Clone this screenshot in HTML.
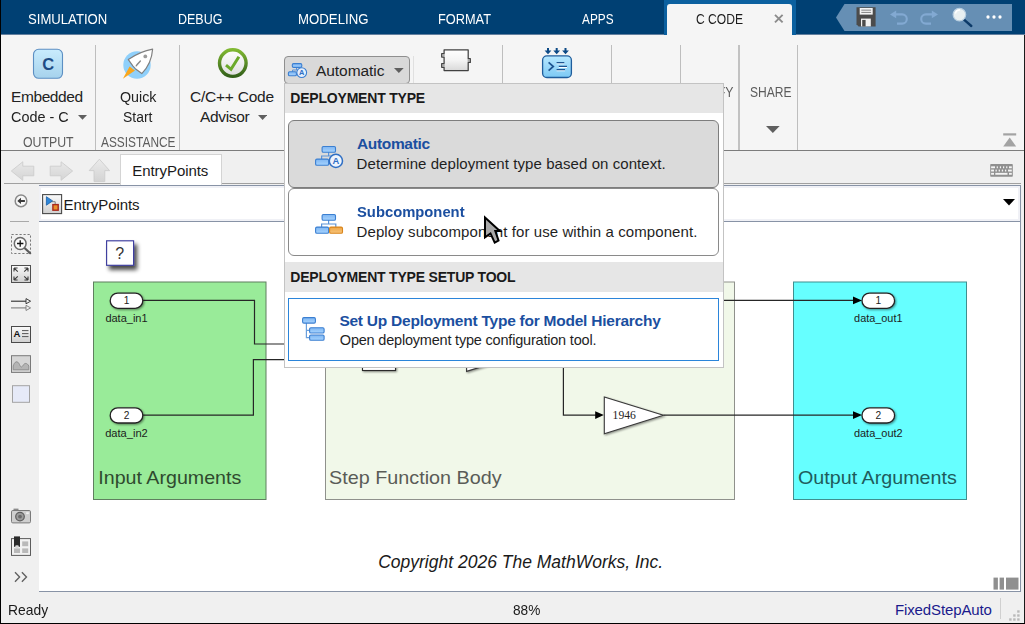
<!DOCTYPE html><html lang="en"><head><meta charset="utf-8"><title>EntryPoints - Simulink</title><style>
html,body{margin:0;padding:0;background:#f0f0f0;}
body{width:1025px;height:624px;overflow:hidden;position:relative;font-family:"Liberation Sans",sans-serif;}
#app{position:absolute;left:0;top:0;width:1025px;height:624px;overflow:hidden;background:#f0f0f0;}
#app div,#app span,#app svg{position:absolute;box-sizing:border-box;}
#app section,#app nav,#app header,#app footer,#app main,#app aside,#app ul,#app li{position:absolute;left:0;top:0;margin:0;padding:0;list-style:none;}
.t{white-space:pre;transform-origin:0 50%;}
.sep{background:#bebebe;width:1px;}
</style></head><body><div id="app"><svg style="left:0;top:0" width="1025" height="624" viewBox="0 0 1025 624"><defs>
<linearGradient id="gC" x1="0" y1="0" x2="0" y2="1"><stop offset="0" stop-color="#c9ecfd"/><stop offset="1" stop-color="#a6d2ec"/></linearGradient>
<linearGradient id="gCode" x1="0" y1="0" x2="0" y2="1"><stop offset="0" stop-color="#b8e8ff"/><stop offset="1" stop-color="#7cc9f4"/></linearGradient>
<linearGradient id="gRing" x1="0" y1="0" x2="0" y2="1"><stop offset="0" stop-color="#80b832"/><stop offset="1" stop-color="#33601a"/></linearGradient>
<linearGradient id="gDisc" x1="0" y1="0" x2="0" y2="1"><stop offset="0" stop-color="#ffffff"/><stop offset="1" stop-color="#dedede"/></linearGradient>
<linearGradient id="gComp" x1="0" y1="0" x2="0" y2="1"><stop offset="0" stop-color="#ffffff"/><stop offset="0.5" stop-color="#f4f4f4"/><stop offset="1" stop-color="#d9d9d9"/></linearGradient>
<linearGradient id="gBtn" x1="0" y1="0" x2="0" y2="1"><stop offset="0" stop-color="#fbfbfb"/><stop offset="1" stop-color="#cfcfcf"/></linearGradient>
<linearGradient id="gBlue" x1="0" y1="0" x2="0" y2="1"><stop offset="0" stop-color="#7fb6f2"/><stop offset="1" stop-color="#a6d3ff"/></linearGradient>
<linearGradient id="gOrange" x1="0" y1="0" x2="0" y2="1"><stop offset="0" stop-color="#eea544"/><stop offset="1" stop-color="#f7c47a"/></linearGradient>
<filter id="sh" x="-50%" y="-50%" width="220%" height="220%"><feGaussianBlur in="SourceAlpha" stdDeviation="2.1"/><feOffset dx="2.6" dy="3.6"/><feComponentTransfer><feFuncA type="linear" slope="0.72"/></feComponentTransfer><feMerge><feMergeNode/><feMergeNode in="SourceGraphic"/></feMerge></filter>
<filter id="sh2" x="-30%" y="-30%" width="180%" height="180%"><feGaussianBlur in="SourceAlpha" stdDeviation="0.9"/><feOffset dx="1.3" dy="1.3"/><feComponentTransfer><feFuncA type="linear" slope="0.45"/></feComponentTransfer><feMerge><feMergeNode/><feMergeNode in="SourceGraphic"/></feMerge></filter>
<linearGradient id="gNav" gradientUnits="userSpaceOnUse" x1="0" y1="159" x2="0" y2="182"><stop offset="0" stop-color="#ebebeb"/><stop offset="1" stop-color="#d3d3d3"/></linearGradient>
<filter id="blur1"><feGaussianBlur stdDeviation="0.6"/></filter>
</defs></svg><header class="tabbar"><div style="left:0px;top:0px;width:1025px;height:34px;background:#004073;"></div><div style="left:0px;top:34px;width:1025px;height:1px;background:#637f9e;"></div><span class="t" style="left:28.00px;top:10.00px;font-size:15px;line-height:18px;color:#ffffff;transform:scaleX(0.8748);">SIMULATION</span><span class="t" style="left:177.67px;top:10.00px;font-size:15px;line-height:18px;color:#ffffff;transform:scaleX(0.8321);">DEBUG</span><span class="t" style="left:297.62px;top:10.00px;font-size:15px;line-height:18px;color:#ffffff;transform:scaleX(0.8808);">MODELING</span><span class="t" style="left:438.15px;top:10.00px;font-size:15px;line-height:18px;color:#ffffff;transform:scaleX(0.8518);">FORMAT</span><span class="t" style="left:582.00px;top:10.00px;font-size:15px;line-height:18px;color:#ffffff;transform:scaleX(0.7872);">APPS</span><div style="left:664px;top:0px;width:132px;height:35px;background:#0b609f;"></div><div style="left:667px;top:4px;width:125px;height:31px;background:#f5f5f5;border-radius:3px 3px 0 0;"></div><span class="t" style="left:696.40px;top:10.00px;font-size:15px;line-height:18px;color:#1c1c1c;transform:scaleX(0.8057);">C CODE</span><svg style="left:0;top:0" width="1025" height="624" viewBox="0 0 1025 624"><path d="M775 14.8L782.6 22.4M782.6 14.8L775 22.4" stroke="#8c8c8c" stroke-width="1.9" fill="none"/></svg><svg style="left:0;top:0" width="1025" height="624" viewBox="0 0 1025 624">
<path d="M836 17.5L844.5 4H1012V31H844.5Z" fill="#668fb4"/>
<g class="save">
 <path d="M856.5 7.2H875.6V26.4H858.6L856.5 24.3Z" fill="#4b4b4b"/>
 <rect x="859.7" y="8" width="13" height="6.6" fill="#f4f4f4"/>
 <rect x="861.3" y="9.6" width="9.8" height="1.1" fill="#8d8d8d"/><rect x="861.3" y="11.9" width="9.8" height="1.1" fill="#8d8d8d"/>
 <rect x="861" y="18.6" width="9.8" height="7.8" fill="#f1f1f1"/>
 <rect x="862.2" y="19.9" width="3.4" height="6.5" fill="#4b4b4b"/>
</g>
<g class="undo" fill="none" stroke="#82a9d2" stroke-width="2.1">
 <path d="M894.5 14.4H902.2A4.6 4.6 0 0 1 902.2 23.6H897"/>
 <path d="M890 14.4L896.2 10.6V18.2Z" fill="#82a9d2" stroke="none"/>
</g>
<g class="redo" fill="none" stroke="#82a9d2" stroke-width="2.1">
 <path d="M933.5 14.4H925.8A4.6 4.6 0 0 0 925.8 23.6H931"/>
 <path d="M938 14.4L931.8 10.6V18.2Z" fill="#82a9d2" stroke="none"/>
</g>
<g class="search">
 <path d="M964 19.6L971.3 26" stroke="#0c3a68" stroke-width="2.4" stroke-linecap="round"/>
 <circle cx="959.4" cy="14.6" r="6.3" fill="#e9f0f1" stroke="#b9cfe0" stroke-width="1.2"/>
 <path d="M955.5 13.5A4.2 4.2 0 0 1 960 10" stroke="#ffffff" stroke-width="1.4" fill="none"/>
</g>
<g class="more" fill="#ffffff"><circle cx="988" cy="17" r="1.65"/><circle cx="994" cy="17" r="1.65"/><circle cx="1000" cy="17" r="1.65"/></g>
</svg></header><section class="toolstrip"><div style="left:0px;top:35px;width:1025px;height:115px;background:#f5f5f5;"></div><div style="left:0px;top:150px;width:1025px;height:1px;background:#7c7c7c;"></div><div class="sep" style="left:95px;top:45px;width:1px;height:105px;"></div><div class="sep" style="left:179px;top:45px;width:1px;height:105px;"></div><div class="sep" style="left:502px;top:45px;width:1px;height:105px;"></div><div class="sep" style="left:611px;top:45px;width:1px;height:105px;"></div><div class="sep" style="left:680px;top:45px;width:1px;height:105px;"></div><div class="sep" style="left:797px;top:45px;width:1px;height:105px;"></div><div style="left:738px;top:45px;width:2px;height:105px;background:#c2c2c2;"></div><div style="left:413px;top:56px;width:1px;height:27px;background:#e0e0e0;"></div><svg style="left:0;top:0" width="1025" height="624" viewBox="0 0 1025 624"><rect x="33.5" y="49.3" width="29" height="29" rx="5.2" fill="url(#gC)" stroke="#5c8fc3" stroke-width="1.1"/>
<text x="48.2" y="70" text-anchor="middle" font-family="Liberation Sans, sans-serif" font-weight="700" font-size="16.5" fill="#1e4c84">C</text></svg><span class="t" style="left:11.00px;top:87.00px;font-size:15.5px;line-height:19px;color:#222222;letter-spacing:-0.407px;">Embedded</span><span class="t" style="left:11.30px;top:107.00px;font-size:15.5px;line-height:19px;color:#222222;transform:scaleX(0.9300);">Code - C</span><svg style="left:77.5px;top:115px" width="9" height="4.8" viewBox="0 0 9 4.8" ><path d="M0 0H9L4.5 4.8Z" fill="#5f5f5f"/></svg><span class="t" style="left:22.50px;top:133.00px;font-size:15px;line-height:18px;color:#5c5c5c;transform:scaleX(0.8211);">OUTPUT</span><svg style="left:0;top:0" width="1025" height="624" viewBox="0 0 1025 624"><circle cx="137" cy="65" r="13.7" fill="#8fd0fb" filter="url(#blur1)"/>
<path d="M122.9 78.7L129.6 66.6L135 70.6Z" fill="#f9a61c"/>
<path d="M152.6 49.2Q140.5 51.3 128.3 59.6L133 66.1L135.3 68.7L141.8 73.6Q151.6 63.5 152.6 49.2Z" fill="#ffffff" stroke="#808080" stroke-width="1.2" stroke-linejoin="round"/>
<circle cx="145.3" cy="56.4" r="1.9" fill="#9c9c9c"/>
<path d="M140.4 61L136.9 64.8L136.2 65.9Z" fill="#8a8a8a" stroke="#8a8a8a" stroke-width="1.3" stroke-linejoin="round"/></svg><span class="t" style="left:119.50px;top:87.00px;font-size:15.5px;line-height:19px;color:#222222;transform:scaleX(0.9217);">Quick</span><span class="t" style="left:122.50px;top:107.00px;font-size:15.5px;line-height:19px;color:#222222;transform:scaleX(0.8975);">Start</span><span class="t" style="left:100.50px;top:133.00px;font-size:15px;line-height:18px;color:#5c5c5c;transform:scaleX(0.7933);">ASSISTANCE</span><svg style="left:0;top:0" width="1025" height="624" viewBox="0 0 1025 624"><circle cx="232.8" cy="63.1" r="13.3" fill="url(#gDisc)" stroke="url(#gRing)" stroke-width="3.4"/>
<path d="M226 65.2L231 69.3L238.9 56.8" fill="none" stroke="#6aa92a" stroke-width="3"/></svg><span class="t" style="left:190.00px;top:87.00px;font-size:15.5px;line-height:19px;color:#222222;letter-spacing:-0.226px;">C/C++ Code</span><span class="t" style="left:200.00px;top:107.00px;font-size:15.5px;line-height:19px;color:#222222;letter-spacing:-0.337px;">Advisor</span><svg style="left:257.6px;top:115px" width="9.2" height="4.9" viewBox="0 0 9.2 4.9" ><path d="M0 0H9.2L4.6 4.9Z" fill="#5f5f5f"/></svg><div style="left:284px;top:56px;width:126px;height:28px;background:#d9d9d9;border:1px solid #8f8f8f;border-radius:4px;"></div><svg style="left:0;top:0" width="1025" height="624" viewBox="0 0 1025 624"><path d="M296.5 67.5V70H292.5V72" fill="none" stroke="#5b93d8" stroke-width="1"/>
<rect x="292.3" y="63.6" width="9.5" height="3.8" rx="1.3" fill="url(#gBlue)" stroke="#3b7fd1" stroke-width="1.1"/><rect x="288.4" y="71.8" width="8" height="4" rx="1.3" fill="url(#gBlue)" stroke="#3b7fd1" stroke-width="1.1"/>
<circle cx="301.7" cy="72.6" r="4.9" fill="#e4eefc" stroke="#3b7fd1" stroke-width="1.1"/>
<text x="301.7" y="75.3" text-anchor="middle" font-family="Liberation Sans, sans-serif" font-weight="700" font-size="7.4" fill="#2f6fc4">A</text></svg><span class="t" style="left:316.00px;top:61.00px;font-size:15.5px;line-height:19px;color:#222222;letter-spacing:-0.052px;">Automatic</span><svg style="left:394.3px;top:68px" width="9.7" height="5" viewBox="0 0 9.7 5" ><path d="M0 0H9.7L4.85 5Z" fill="#5f5f5f"/></svg><svg style="left:0;top:0" width="1025" height="624" viewBox="0 0 1025 624"><path d="M444.1 49.8H468.2V58.7H470.3V62.4H468.2V70.5H444.1V67.3H441.7V63.6H444.1V57H441.7V53.7H444.1Z" fill="url(#gComp)" stroke="#414141" stroke-width="1.25" stroke-linejoin="round"/>
<g fill="#8f8f8f" fill-opacity="0.75"><rect x="442.3" y="54.3" width="2.4" height="2.1"/><rect x="442.3" y="64.2" width="2.4" height="2.5"/><rect x="467.6" y="59.3" width="2.1" height="2.5"/></g></svg><svg style="left:0;top:0" width="1025" height="624" viewBox="0 0 1025 624"><rect x="542.6" y="55.9" width="28.8" height="21.6" rx="4.3" fill="url(#gCode)" stroke="#1f5d9c" stroke-width="1.3"/>
<g fill="#0d4a86"><path d="M547 48H549V50.6H551.4L548 54.3L544.6 50.6H547Z"/><path d="M555.7 48H557.7V50.6H560.1L556.7 54.3L553.3 50.6H555.7Z"/><path d="M564.5 48H566.5V50.6H568.9L565.5 54.3L562.1 50.6H564.5Z"/></g>
<path d="M548.6 62.4L553.3 66.5L548.6 70.7" fill="none" stroke="#1d5592" stroke-width="1.7"/>
<g stroke="#ffffff" stroke-width="1.1"><path d="M556.6 63.7H564.3M558.8 67.4H567M556.6 70.8H565"/></g>
<g stroke="#1d5592" stroke-width="1.2"><path d="M556.6 62.6H564.3M558.8 66.3H567M556.6 69.7H565"/></g></svg><span class="t" style="left:689.00px;top:83.00px;font-size:15px;line-height:18px;color:#5c5c5c;transform:scaleX(0.8215);">VERIFY</span><span class="t" style="left:749.90px;top:83.00px;font-size:15px;line-height:18px;color:#5c5c5c;transform:scaleX(0.8050);">SHARE</span><svg style="left:766.3px;top:126px" width="13.7" height="7" viewBox="0 0 13.7 7" ><path d="M0 0H13.7L6.85 7Z" fill="#5f5f5f"/></svg><svg style="left:0;top:0" width="1025" height="624" viewBox="0 0 1025 624"><rect x="1003.2" y="133.3" width="13" height="2.2" fill="#a3a3a3"/><path d="M1009.7 137.6L1016.2 146.5H1003.2Z" fill="#a3a3a3"/></svg></section><nav class="navbar"><div style="left:0px;top:151px;width:1025px;height:34px;background:#f0f0f0;"></div><div style="left:4px;top:183px;width:1017px;height:1px;background:#a0a0a0;"></div><div style="left:120px;top:154px;width:102px;height:31px;background:#ffffff;border:1px solid #d4d4d4;border-bottom:none;"></div><span class="t" style="left:132.30px;top:162.00px;font-size:15px;line-height:18px;color:#1a1a1a;letter-spacing:-0.070px;">EntryPoints</span><svg style="left:0;top:0" width="1025" height="624" viewBox="0 0 1025 624"><g fill="url(#gNav)" stroke="#cdcdcd" stroke-width="0.9" stroke-linejoin="round">
<path d="M11.3 171L22.8 161.8V166.2H33.8V175.8H22.8V180.3Z"/>
<path d="M72.6 171L61.1 161.8V166.2H50.2V175.8H61.1V180.3Z"/>
<path d="M99.4 159.2L109.6 170.6H104.8V181.6H94V170.6H89.2Z"/></g></svg><svg style="left:0;top:0" width="1025" height="624" viewBox="0 0 1025 624"><rect x="990.2" y="164.1" width="22.6" height="12.7" rx="0.8" fill="#8f8f8f"/><g fill="#f4f4f4"><rect x="991.10" y="166.35" width="3.90" height="1.9"/><rect x="996.70" y="166.35" width="1.20" height="1.9"/><rect x="999.85" y="166.35" width="1.20" height="1.9"/><rect x="1003.00" y="166.35" width="1.20" height="1.9"/><rect x="1006.15" y="166.35" width="1.20" height="1.9"/><rect x="1009.00" y="166.35" width="2.80" height="1.9"/><rect x="991.10" y="169.60" width="2.90" height="1.9"/><rect x="995.50" y="169.60" width="1.30" height="1.9"/><rect x="998.65" y="169.60" width="1.30" height="1.9"/><rect x="1001.80" y="169.60" width="1.30" height="1.9"/><rect x="1004.95" y="169.60" width="1.30" height="1.9"/><rect x="1008.00" y="169.60" width="3.80" height="1.9"/><rect x="991.10" y="172.85" width="2.90" height="1.9"/><rect x="995.30" y="172.85" width="12.20" height="1.9"/><rect x="1009.00" y="172.85" width="2.80" height="1.9"/></g></svg></nav><aside class="palette"><div style="left:1px;top:185px;width:38px;height:407px;background:#f0f0f0;"></div><svg style="left:0;top:0" width="1025" height="624" viewBox="0 0 1025 624">
<g class="back"><circle cx="21" cy="200.9" r="5.8" fill="#f6f6f6" stroke="#8a8a8a" stroke-width="1.5"/><path d="M17.3 200.9L21 197.8V199.9H24.9V201.9H21V204Z" fill="#3a3a3a"/></g>
<rect x="10" y="221" width="19" height="1" fill="#a9a9a9"/>
<g class="zoom"><rect x="11.5" y="234.5" width="19" height="19" fill="none" stroke="#7a7a7a" stroke-width="1" stroke-dasharray="2.2 1.8"/>
 <path d="M24.8 248.2L30.2 253.2" stroke="#5a5a5a" stroke-width="2.2" stroke-linecap="round"/>
 <circle cx="20.2" cy="243.5" r="5.9" fill="#fafafa" stroke="#6a6a6a" stroke-width="1.5"/>
 <path d="M17 243.5H23.4M20.2 240.3V246.7" stroke="#111" stroke-width="1.3"/></g>
<g class="fit"><rect x="11.5" y="265.5" width="19" height="17" fill="url(#gBtn)" stroke="#4f4f4f" stroke-width="1"/>
 <path d="M14 268V271.6M14 268H17.6M14 268L17.8 271.6M28 268V271.6M28 268H24.4M28 268L24.2 271.6M14 280V276.4M14 280H17.6M14 280L17.8 276.4M28 280V276.4M28 280H24.4M28 280L24.2 276.4" stroke="#3c3c3c" stroke-width="1.1" fill="none"/></g>
<g class="lines"><path d="M11 301.2H28.6" stroke="#2e2e2e" stroke-width="1.1"/><path d="M26 298.6L30.6 301.2L26 303.8Z" fill="#f0f0f0" stroke="#2e2e2e" stroke-width="0.9"/>
 <path d="M11 307.9H28.6" stroke="#7c7c7c" stroke-width="1.1"/><path d="M26 305.3L30.6 307.9L26 310.5Z" fill="#f0f0f0" stroke="#7c7c7c" stroke-width="0.9"/></g>
<g class="annot"><rect x="11.5" y="326.5" width="19" height="16" fill="url(#gBtn)" stroke="#4a4a4a" stroke-width="1"/>
 <text x="13.4" y="337.3" font-family="Liberation Sans, sans-serif" font-weight="700" font-size="9.5" fill="#111">A</text>
 <path d="M22 330.6H28.5M22 333.6H28.5M22 336.6H28.5" stroke="#555" stroke-width="1"/></g>
<g class="image"><rect x="11.5" y="355.7" width="19" height="16.7" fill="#d6d6d6" stroke="#7a7a7a" stroke-width="1"/>
 <path d="M13.2 369.8V366C14.5 361.5 17.5 360 19.5 364.5C20.5 367 21.5 368 23 365.5C24.5 362.8 27 362.5 28.8 366V369.8Z" fill="#b4b4b4" stroke="#8a8a8a" stroke-width="0.9"/></g>
<rect class="area" x="12.5" y="385.7" width="17" height="16.6" fill="#e6eaf8" stroke="#a3a3a3" stroke-width="1"/>
<g class="camera"><rect x="13.5" y="508.6" width="5" height="2.5" fill="#8a8a8a"/><rect x="11.5" y="510.5" width="19" height="12.4" rx="1.3" fill="#cfcfcf" stroke="#7a7a7a" stroke-width="1"/>
 <circle cx="20" cy="516.6" r="4.3" fill="#9b9b9b" stroke="#5e5e5e" stroke-width="1.2"/><circle cx="20" cy="516.6" r="1.9" fill="#6a6a6a"/><rect x="26.2" y="512.3" width="2.6" height="1.8" fill="#f3f3f3"/></g>
<g class="props"><rect x="11.5" y="538.6" width="19" height="16.8" fill="#f2f2f2" stroke="#5c5c5c" stroke-width="1"/>
 <rect x="14" y="548.4" width="6" height="4.6" fill="#b9b9b9"/><rect x="22.2" y="541.4" width="6" height="4.8" fill="#b9b9b9"/><rect x="22.2" y="548.4" width="6" height="4.6" fill="#b9b9b9"/>
 <rect x="14" y="536.4" width="6" height="10.4" fill="#2b2b2b"/><rect x="15.2" y="545.2" width="3.6" height="2.8" rx="1.3" fill="#d8d8d8"/></g>
<path class="expand" d="M15 572.2L19.6 577L15 581.8M21.9 572.2L26.5 577L21.9 581.8" fill="none" stroke="#606060" stroke-width="1.35"/>
</svg></aside><div class="breadcrumb" style="left:0;top:0"><div style="left:39px;top:185px;width:982px;height:37px;background:#ffffff;border:1px solid #8893a6;border-left:none;box-shadow:inset 0 0 0 2px #f0f1f6;"></div><svg style="left:0;top:0" width="1025" height="624" viewBox="0 0 1025 624"><rect x="42.6" y="194.6" width="19" height="19" fill="url(#gBtn)" stroke="#4a4a4a" stroke-width="1.1"/>
<path d="M50 201.7H55.2V205.5" fill="none" stroke="#7d7d7d" stroke-width="1"/>
<path d="M46.4 196.7L52.6 200.9L46.4 205.2Z" fill="#2d86d9" stroke="#1b5fa8" stroke-width="0.8"/>
<rect x="52.9" y="204.6" width="5.3" height="5.6" fill="#e9902a" stroke="#a8281c" stroke-width="1.4"/></svg><span class="t" style="left:63.60px;top:196.00px;font-size:15px;line-height:18px;color:#1a1a1a;letter-spacing:-0.070px;">EntryPoints</span><svg style="left:1002.6px;top:199.4px" width="12" height="6.5" viewBox="0 0 12 6.5" ><path d="M0 0H12L6.0 6.5Z" fill="#000000"/></svg></div><main class="canvas"><div style="left:39px;top:222px;width:982px;height:370px;background:#ffffff;border-right:1px solid #8893a6;border-bottom:1px solid #8893a6;"></div><svg class="diagram" style="left:0;top:0" width="1025" height="624" viewBox="0 0 1025 624"><g font-family="Liberation Sans, sans-serif">
<g class="areas" stroke-width="1">
 <rect x="93.5" y="282" width="172.5" height="217.5" fill="#99eb99" stroke="#5f7f5f"/>
 <rect x="325.5" y="282" width="409" height="217.5" fill="#f1f8e9" stroke="#8f918c"/>
 <rect x="793.5" y="282" width="173" height="217.5" fill="#66ffff" stroke="#3f8f8f"/>
</g>
<g class="area-labels" font-size="19">
 <text x="98.3" y="484.2" textLength="143" lengthAdjust="spacingAndGlyphs" fill="#2f4a2f">Input Arguments</text>
 <text x="329" y="484.2" textLength="172.6" lengthAdjust="spacingAndGlyphs" fill="#5a5c57">Step Function Body</text>
 <text x="798" y="484.2" textLength="158.8" lengthAdjust="spacingAndGlyphs" fill="#1f5c5c">Output Arguments</text>
</g>
<g class="doc-block"><rect x="106.6" y="240.8" width="27" height="24.5" fill="#ffffff" stroke="#3c3c9e" stroke-width="1.15" filter="url(#sh)"/>
 <text x="119.6" y="258.8" text-anchor="middle" font-size="16" fill="#333">?</text></g>
<g class="signals" fill="none" stroke="#262626" stroke-width="1.2">
 <path d="M143 300.4H254.5V344H362"/>
 <path d="M143 415.1H253.4V359.7H362"/>
 <path d="M396 351.6H466"/>
 <path d="M526 353H563.4"/>
 <path d="M563.4 300.4V415.1H596"/>
 <path d="M563.4 300.4H854"/>
 <path d="M663.5 415.1H854"/>
</g>
<g class="arrowheads" fill="#000000">
 <path d="M595.2 411.3L603.8 415.1L595.2 418.9Z"/>
 <path d="M853 296.6L862 300.4L853 304.2Z"/>
 <path d="M853 411.3L862 415.1L853 418.9Z"/>
</g>
<g class="blocks">
 <rect x="362.5" y="336.5" width="33" height="34" fill="#ffffff" stroke="#2b2b2b" stroke-width="1.1" filter="url(#sh2)"/>
 <path d="M466.6 334.6V371.4L526 353Z" fill="#ffffff" stroke="#3a3a3a" stroke-width="1.1" filter="url(#sh2)"/>
 <path d="M604.3 396.9V433.7L663.4 415.3Z" fill="#ffffff" stroke="#3a3a3a" stroke-width="1.1" filter="url(#sh2)"/>
 <text x="612.6" y="419" font-family="Liberation Serif, serif" font-size="11.6" textLength="23.3" lengthAdjust="spacingAndGlyphs" fill="#222">1946</text>
</g>
<g class="port"><rect x="110.2" y="293.1" width="32.6" height="15.2" rx="7.6" fill="#ffffff" stroke="#242424" stroke-width="1.3" filter="url(#sh2)"/><text x="126.5" y="304.35" text-anchor="middle" font-size="10.2" fill="#222">1</text><text x="105.40" y="321.7" font-size="10.56" textLength="42.2" lengthAdjust="spacingAndGlyphs" fill="#1c1c1c">data_in1</text></g>
<g class="port"><rect x="110.2" y="407.8" width="32.6" height="15.2" rx="7.6" fill="#ffffff" stroke="#242424" stroke-width="1.3" filter="url(#sh2)"/><text x="126.5" y="419.05" text-anchor="middle" font-size="10.2" fill="#222">2</text><text x="105.20" y="436.6" font-size="10.56" textLength="42.6" lengthAdjust="spacingAndGlyphs" fill="#1c1c1c">data_in2</text></g>
<g class="port"><rect x="862" y="293.1" width="32.6" height="15.2" rx="7.6" fill="#ffffff" stroke="#242424" stroke-width="1.3" filter="url(#sh2)"/><text x="878.3" y="304.35" text-anchor="middle" font-size="10.2" fill="#222">1</text><text x="854.10" y="321.7" font-size="10.56" textLength="48.4" lengthAdjust="spacingAndGlyphs" fill="#1c1c1c">data_out1</text></g>
<g class="port"><rect x="862" y="407.8" width="32.6" height="15.2" rx="7.6" fill="#ffffff" stroke="#242424" stroke-width="1.3" filter="url(#sh2)"/><text x="878.3" y="419.05" text-anchor="middle" font-size="10.2" fill="#222">2</text><text x="853.90" y="436.6" font-size="10.56" textLength="48.8" lengthAdjust="spacingAndGlyphs" fill="#1c1c1c">data_out2</text></g>
<text x="378.2" y="568.1" font-style="italic" font-size="17.6" textLength="285" lengthAdjust="spacingAndGlyphs" fill="#1a1a1a">Copyright 2026 The MathWorks, Inc.</text>
<g class="perspectives" fill="#8f8f8f"><rect x="993.5" y="577.6" width="4.4" height="12"/><rect x="999.6" y="577.6" width="4.4" height="12"/><rect x="1006" y="577.6" width="12.5" height="12"/></g>
</g></svg></main><footer class="statusbar"><div style="left:0px;top:592px;width:1025px;height:32px;background:#f0f0f0;"></div><span class="t" style="left:7.58px;top:601.00px;font-size:15px;line-height:18px;color:#1a1a1a;transform:scaleX(0.9240);">Ready</span><span class="t" style="left:513.00px;top:601.00px;font-size:15px;line-height:18px;color:#1a1a1a;transform:scaleX(0.9096);">88%</span><span class="t" style="left:895.00px;top:601.00px;font-size:15px;line-height:18px;color:#1a1a8c;letter-spacing:-0.129px;">FixedStepAuto</span><div style="left:1000px;top:598px;width:1px;height:21px;background:#d0d0d0;"></div><svg style="left:0;top:0" width="1025" height="624" viewBox="0 0 1025 624"><rect x="1017.2" y="610.3" width="2.4" height="2.4" fill="#b9b9b9"/><rect x="1013.2" y="614.3" width="2.4" height="2.4" fill="#b9b9b9"/><rect x="1017.2" y="614.3" width="2.4" height="2.4" fill="#b9b9b9"/><rect x="1009.2" y="618.3" width="2.4" height="2.4" fill="#b9b9b9"/><rect x="1013.2" y="618.3" width="2.4" height="2.4" fill="#b9b9b9"/><rect x="1017.2" y="618.3" width="2.4" height="2.4" fill="#b9b9b9"/></svg></footer><div class="popup" style="left:0;top:0"><div style="left:284px;top:83px;width:440px;height:285px;background:#ffffff;border:1px solid #c3c3c3;"></div><div style="left:285px;top:84px;width:438px;height:29px;background:#e6e6e6;"></div><span class="t" style="left:290.30px;top:90.00px;font-size:14px;line-height:17px;color:#1a1a1a;font-weight:700;letter-spacing:-0.203px;">DEPLOYMENT TYPE</span><div style="left:288px;top:120px;width:431px;height:68px;background:#dadada;border:1px solid #7d7d7d;border-radius:6px;"></div><svg style="left:0;top:0" width="1025" height="624" viewBox="0 0 1025 624"><path d="M328.6 152.0V156.0M321.6 159.0V156.0H335.8" fill="none" stroke="#5b93d8" stroke-width="1.2"/><rect x="322.1" y="146.5" width="13.4" height="5.8" rx="1.3" fill="url(#gBlue)" stroke="#3b7fd1" stroke-width="1.1"/><rect x="315.6" y="159.1" width="13" height="6.1" rx="1.3" fill="url(#gBlue)" stroke="#3b7fd1" stroke-width="1.1"/><circle cx="335.9" cy="160.9" r="6.6" fill="#eef4fd" stroke="#2f6fc4" stroke-width="1.5"/><text x="335.9" y="164.3" text-anchor="middle" font-family="Liberation Sans, sans-serif" font-weight="700" font-size="9.4" fill="#2f6fc4">A</text></svg><span class="t" style="left:356.90px;top:134.00px;font-size:15.5px;line-height:19px;color:#1b4fa0;font-weight:700;letter-spacing:-0.320px;">Automatic</span><span class="t" style="left:356.60px;top:155.00px;font-size:15px;line-height:18px;color:#1f1f1f;letter-spacing:0.075px;">Determine deployment type based on context.</span><div style="left:288px;top:188px;width:431px;height:68px;background:#ffffff;border:1px solid #8a8a8a;border-radius:6px;"></div><svg style="left:0;top:0" width="1025" height="624" viewBox="0 0 1025 624"><path d="M328.6 220.0V224.0M321.6 227.0V224.0H335.8V227.0" fill="none" stroke="#5b93d8" stroke-width="1.2"/><rect x="322.1" y="214.5" width="13.4" height="5.8" rx="1.3" fill="url(#gBlue)" stroke="#3b7fd1" stroke-width="1.1"/><rect x="315.6" y="227.1" width="13" height="6.1" rx="1.3" fill="url(#gBlue)" stroke="#3b7fd1" stroke-width="1.1"/><rect x="329.6" y="227.1" width="12.9" height="6.1" rx="1.3" fill="url(#gOrange)" stroke="#d9851c" stroke-width="1.1"/></svg><span class="t" style="left:356.90px;top:202.00px;font-size:15.5px;line-height:19px;color:#1b4fa0;font-weight:700;transform:scaleX(0.9535);">Subcomponent</span><span class="t" style="left:356.60px;top:223.00px;font-size:15px;line-height:18px;color:#1f1f1f;letter-spacing:0.085px;">Deploy subcomponent for use within a component.</span><div style="left:285px;top:262px;width:438px;height:30px;background:#e6e6e6;"></div><span class="t" style="left:290.30px;top:269.00px;font-size:14px;line-height:17px;color:#1a1a1a;font-weight:700;letter-spacing:-0.209px;">DEPLOYMENT TYPE SETUP TOOL</span><div style="left:288px;top:298px;width:431px;height:63px;background:#ffffff;border:1px solid #2b85da;"></div><svg style="left:0;top:0" width="1025" height="624" viewBox="0 0 1025 624"><path d="M306.4 323V337.6H309.5M306.4 330.3H309.5" fill="none" stroke="#6a9fdc" stroke-width="1.2"/>
<rect x="302.6" y="317.6" width="12.8" height="5.5" rx="1.3" fill="url(#gBlue)" stroke="#3b7fd1" stroke-width="1.1"/><rect x="309.6" y="327.7" width="14.5" height="5.3" rx="1.3" fill="url(#gBlue)" stroke="#3b7fd1" stroke-width="1.1"/><rect x="309.6" y="335" width="14.5" height="5.3" rx="1.3" fill="url(#gBlue)" stroke="#3b7fd1" stroke-width="1.1"/></svg><span class="t" style="left:339.40px;top:311.00px;font-size:15.5px;line-height:19px;color:#1b4fa0;font-weight:700;letter-spacing:-0.241px;">Set Up Deployment Type for Model Hierarchy</span><span class="t" style="left:339.80px;top:332.00px;font-size:14.5px;line-height:17px;color:#1f1f1f;letter-spacing:-0.199px;">Open deployment type configuration tool.</span></div><svg class="cursor" style="left:0;top:0" width="1025" height="624" viewBox="0 0 1025 624"><path d="M485 217.6L499.8 230.9H495.3L498.5 240.5L494.7 242.7L490.5 233.4L485 237.3Z" fill="#a9a9a9" stroke="#000000" stroke-width="2" stroke-linejoin="miter" stroke-miterlimit="8"/></svg><div style="left:0px;top:0px;width:1px;height:624px;background:#000;"></div><div style="left:1024px;top:35px;width:1px;height:589px;background:#1a1a1a;"></div><div style="left:0px;top:623px;width:1025px;height:1px;background:#000;"></div></div></body></html>
